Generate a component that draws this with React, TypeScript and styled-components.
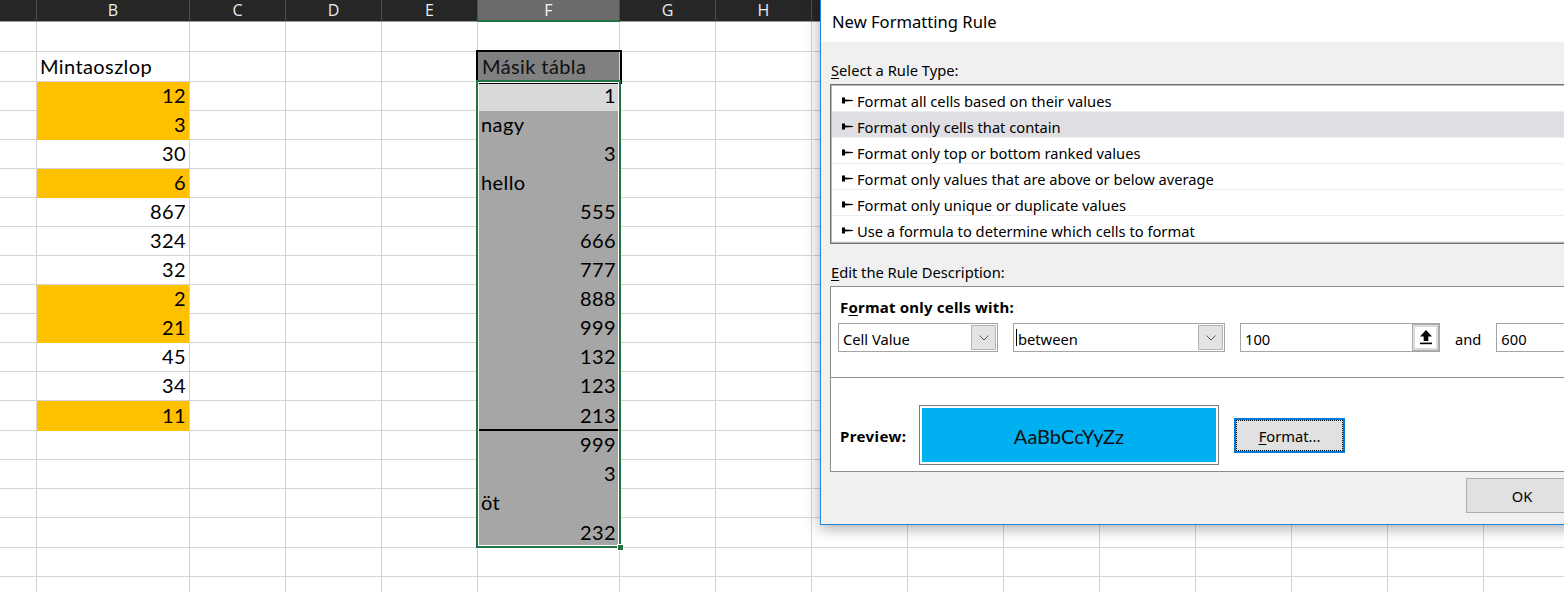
import React from 'react';
import styled, { createGlobalStyle, css } from 'styled-components';

const GlobalStyle = createGlobalStyle`
  html, body { margin: 0; padding: 0; background: #fff; }
  body { overflow: hidden; }
  *, *::before, *::after { box-sizing: border-box; }
`;

type Col = { key: string; label: string; w: number };
const COLS: Col[] = [
  { key: 'A', label: '', w: 37 },
  { key: 'B', label: 'B', w: 153 },
  { key: 'C', label: 'C', w: 96 },
  { key: 'D', label: 'D', w: 96 },
  { key: 'E', label: 'E', w: 96 },
  { key: 'F', label: 'F', w: 142 },
  { key: 'G', label: 'G', w: 96 },
  { key: 'H', label: 'H', w: 96 },
  { key: 'I', label: '', w: 96 },
  { key: 'J', label: '', w: 96 },
  { key: 'K', label: '', w: 96 },
  { key: 'L', label: '', w: 96 },
  { key: 'M', label: '', w: 96 },
  { key: 'N', label: '', w: 96 },
  { key: 'O', label: '', w: 96 },
  { key: 'P', label: '', w: 96 },
];

const ROW_H = [30, 30, 29, 29, 29, 29, 29, 29, 29, 29, 29, 29, 29, 30, 29, 29, 29, 30, 29, 29];

const YELLOW = '#ffc000';
const GRAY = '#a6a6a6';

type CellData = { v: string; num?: boolean; fill?: string; thickBottom?: boolean; boxed?: boolean };

const B: Record<number, CellData> = {
  2: { v: 'Mintaoszlop' },
  3: { v: '12', num: true, fill: YELLOW },
  4: { v: '3', num: true, fill: YELLOW },
  5: { v: '30', num: true },
  6: { v: '6', num: true, fill: YELLOW },
  7: { v: '867', num: true },
  8: { v: '324', num: true },
  9: { v: '32', num: true },
  10: { v: '2', num: true, fill: YELLOW },
  11: { v: '21', num: true, fill: YELLOW },
  12: { v: '45', num: true },
  13: { v: '34', num: true },
  14: { v: '11', num: true, fill: YELLOW },
};

const F: Record<number, CellData> = {
  2: { v: 'Másik tábla', fill: '#808080', boxed: true },
  3: { v: '1', num: true, fill: '#d9d9d9' },
  4: { v: 'nagy', fill: GRAY },
  5: { v: '3', num: true, fill: GRAY },
  6: { v: 'hello', fill: GRAY },
  7: { v: '555', num: true, fill: GRAY },
  8: { v: '666', num: true, fill: GRAY },
  9: { v: '777', num: true, fill: GRAY },
  10: { v: '888', num: true, fill: GRAY },
  11: { v: '999', num: true, fill: GRAY },
  12: { v: '132', num: true, fill: GRAY },
  13: { v: '123', num: true, fill: GRAY },
  14: { v: '213', num: true, fill: GRAY, thickBottom: true },
  15: { v: '999', num: true, fill: GRAY },
  16: { v: '3', num: true, fill: GRAY },
  17: { v: 'öt', fill: GRAY },
  18: { v: '232', num: true, fill: GRAY },
};

const Page = styled.div`
  position: relative;
  width: 1564px;
  height: 592px;
  overflow: hidden;
  background: #fff;
`;

const Sheet = styled.div`
  position: relative;
  display: flex;
  flex-direction: column;
`;

const HeaderRow = styled.div`
  display: flex;
  height: 22px;
  background: #262626;
`;

const HeaderCell = styled.div<{ $w: number; $active?: boolean }>`
  flex: 0 0 ${(p) => p.$w}px;
  height: 22px;
  display: flex;
  align-items: center;
  justify-content: center;
  border-right: 1px solid #4d4d4d;
  border-bottom: 1px solid #9a9a9a;
  font: 16px/1 'Open Sans', 'Noto Sans', sans-serif;
  color: #ececec;
  padding-bottom: 1px;
  ${(p) =>
    p.$active &&
    css`
      background: #6b6b6b;
      border-bottom: 2px solid #217346;
      color: #f6f6f6;
    `}
`;

const Row = styled.div<{ $h: number }>`
  display: flex;
  height: ${(p) => p.$h}px;
`;

const Cell = styled.div<{ $w: number; $fill?: string; $num?: boolean; $thickBottom?: boolean; $boxed?: boolean }>`
  position: relative;
  flex: 0 0 ${(p) => p.$w}px;
  height: 100%;
  display: flex;
  align-items: flex-end;
  justify-content: ${(p) => (p.$num ? 'flex-end' : 'flex-start')};
  padding: 0 3px ${(p) => (p.$thickBottom ? 4 : 5)}px 3px;
  background: ${(p) => p.$fill ?? '#fff'};
  border-right: 1px solid #d4d4d4;
  border-bottom: ${(p) => (p.$thickBottom ? '2px solid #000' : `1px solid ${p.$fill ?? '#d4d4d4'}`)};
  font: 20px/1 Lato, 'Liberation Sans', sans-serif;
  letter-spacing: 0.4px;
  color: #000;
  white-space: nowrap;
  ${(p) =>
    p.$boxed &&
    css`
      outline: 2px solid #000;
      z-index: 1;
      color: #111;
      padding-left: 4px;
    `}
`;

const Selection = styled.div`
  position: absolute;
  left: 476px;
  top: 80px;
  width: 145px;
  height: 468px;
  border: 2px solid #217346;
  box-shadow: inset 0 0 0 1px #fff;
  z-index: 2;
  pointer-events: none;
`;

const FillHandle = styled.div`
  position: absolute;
  right: -5px;
  bottom: -5px;
  width: 7px;
  height: 7px;
  background: #217346;
  border: 1px solid #fff;
`;

/* Dialog */

const Dialog = styled.div`
  position: absolute;
  left: 820px;
  top: -1px;
  width: 769px;
  border: 1px solid #1e86dc;
  background: #f0f0f0;
  box-shadow: 0 3px 14px rgba(0, 0, 0, 0.35);
  font-family: 'Noto Sans', 'Open Sans', sans-serif;
  font-size: 14.7px;
  color: #000;
  z-index: 5;
`;

const TitleBar = styled.div`
  height: 42px;
  background: #fff;
  display: flex;
  align-items: center;
  padding-left: 11px;
  font-size: 16.6px;
  color: #000;
`;

const Body = styled.div`
  display: flex;
  flex-direction: column;
  padding: 18px 10px 11px 9px;
`;

const Label = styled.div<{ $mt?: number }>`
  height: 20px;
  line-height: 20px;
  margin-top: ${(p) => p.$mt ?? 0}px;
  padding-left: 1px;
`;

const U = styled.span`
  text-decoration: underline;
  text-underline-offset: 2px;
`;

const ListBox = styled.div`
  margin-top: 4px;
  background: #fff;
  border: 1px solid #707070;
  padding: 1px;
  box-shadow: inset 0 0 0 1px #b8b8b8;
`;

const ListItem = styled.div<{ $selected?: boolean }>`
  height: 26px;
  display: flex;
  align-items: center;
  gap: 4px;
  padding: 4px 0 0 10px;
  border-bottom: 1px solid #ededed;
  background: ${(p) => (p.$selected ? '#dfdee3' : '#fff')};
  white-space: nowrap;
`;

const BulletWrap = styled.span`
  display: flex;
  align-items: center;
`;

const Panel = styled.div`
  margin-top: 4px;
  background: #fff;
  border: 1px solid #8c8c8c;
`;

const TopSection = styled.div`
  padding: 9px 7px 25px 7px;
  border-bottom: 1px solid #8c8c8c;
`;

const Heading = styled.div`
  height: 22px;
  line-height: 20px;
  padding: 1px 0 0 2px;
  font-weight: 700;
  font-size: 15px;
  letter-spacing: 0.2px;
`;

const ControlRow = styled.div`
  margin-top: 5px;
  display: flex;
  align-items: center;
  gap: 15px;
  height: 29px;
`;

const Field = styled.div<{ $w: number }>`
  flex: 0 0 ${(p) => p.$w}px;
  height: 29px;
  display: flex;
  align-items: center;
  border: 1px solid #a5a5a5;
  background: #fff;
  padding: 1px 1px 1px 4px;
`;

const FieldText = styled.div`
  flex: 1;
  display: flex;
  align-items: center;
  white-space: nowrap;
  padding-top: 2px;
`;

const Caret = styled.span`
  display: inline-block;
  width: 1px;
  height: 17px;
  background: #000;
  margin-right: 1px;
  margin-left: -2px;
  margin-top: -2px;
`;

const DropButton = styled.div`
  flex: 0 0 25px;
  height: 25px;
  display: flex;
  align-items: center;
  justify-content: center;
  background: #e3e3e3;
  border: 1px solid #b4b4b4;
`;

const CollapseButton = styled.div`
  flex: 0 0 27px;
  height: 27px;
  margin: -1px -1px -1px 0;
  display: flex;
  align-items: center;
  justify-content: center;
  background: #fff;
  border: 1px solid #adadad;
  box-shadow: inset 0 0 0 2px #dcdcdc;
`;

const AndText = styled.span`
  flex: 0 0 auto;
  padding-top: 2px;
`;

const BottomSection = styled.div`
  display: flex;
  align-items: center;
  padding: 27px 7px 6px 9px;
`;

const PreviewLabel = styled.div`
  flex: 0 0 79px;
  font-weight: 700;
  font-size: 15px;
  letter-spacing: 0.4px;
  padding-top: 2px;
`;

const PreviewBox = styled.div`
  flex: 0 0 300px;
  height: 60px;
  border: 1px solid #7a7a7a;
  padding: 2px;
  background: #fff;
`;

const PreviewFill = styled.div`
  height: 100%;
  background: #00b0f0;
  display: flex;
  align-items: center;
  justify-content: center;
  font: 20px/1 Lato, 'Liberation Sans', sans-serif;
  color: #111;
  padding-top: 1px;
`;

const Button = styled.div<{ $focused?: boolean; $w?: number }>`
  position: relative;
  flex: 0 0 ${(p) => p.$w ?? 112}px;
  height: 35px;
  display: flex;
  align-items: center;
  justify-content: center;
  background: #e1e1e1;
  border: 1px solid #adadad;
  padding-top: 1px;
  ${(p) =>
    p.$focused &&
    css`
      border: 2px solid #0078d7;
      &::after {
        content: '';
        position: absolute;
        inset: 0;
        border: 1px dotted #000;
      }
    `}
`;

const FormatButton = styled(Button)`
  margin-left: 15px;
`;

const Footer = styled.div`
  display: flex;
  justify-content: flex-end;
  margin-top: 6px;
`;

const Bullet = () => (
  <svg width="11" height="7" viewBox="0 0 11 7">
    <path d="M0 0.5 H3 V2.4 L11 3 V4 L3 4.6 V6.5 H0 Z" fill="#000" />
  </svg>
);

const Chevron = () => (
  <svg width="10" height="6" viewBox="0 0 10 6">
    <path d="M0.5 0.5 L5 5 L9.5 0.5" fill="none" stroke="#555" strokeWidth="1" />
  </svg>
);

const CollapseIcon = () => (
  <svg width="12" height="15" viewBox="0 0 12 15">
    <path d="M6 0 L12 6.5 H8.3 V11 H3.7 V6.5 H0 Z" fill="#000" />
    <rect x="0" y="12.6" width="12" height="1.6" fill="#000" />
  </svg>
);

const RULES = [
  'Format all cells based on their values',
  'Format only cells that contain',
  'Format only top or bottom ranked values',
  'Format only values that are above or below average',
  'Format only unique or duplicate values',
  'Use a formula to determine which cells to format',
];

export default function App() {
  return (
    <Page>
      <GlobalStyle />
      <Sheet>
        <HeaderRow>
          {COLS.map((c) => (
            <HeaderCell key={c.key} $w={c.w} $active={c.key === 'F'}>
              {c.label}
            </HeaderCell>
          ))}
        </HeaderRow>
        {ROW_H.map((h, ri) => {
          const r = ri + 1;
          return (
            <Row key={r} $h={h}>
              {COLS.map((c) => {
                const d = c.key === 'B' ? B[r] : c.key === 'F' ? F[r] : undefined;
                return (
                  <Cell
                    key={c.key}
                    $w={c.w}
                    $fill={d?.fill}
                    $num={d?.num}
                    $thickBottom={d?.thickBottom}
                    $boxed={d?.boxed}
                  >
                    {d?.v}
                  </Cell>
                );
              })}
            </Row>
          );
        })}
        <Selection>
          <FillHandle />
        </Selection>
      </Sheet>

      <Dialog>
        <TitleBar>New Formatting Rule</TitleBar>
        <Body>
          <Label>
            <U>S</U>elect a Rule Type:
          </Label>
          <ListBox>
            {RULES.map((r, i) => (
              <ListItem key={r} $selected={i === 1}>
                <BulletWrap>
                  <Bullet />
                </BulletWrap>
                <span>{r}</span>
              </ListItem>
            ))}
          </ListBox>
          <Label $mt={18}>
            <U>E</U>dit the Rule Description:
          </Label>
          <Panel>
            <TopSection>
              <Heading>
                F<U>o</U>rmat only cells with:
              </Heading>
              <ControlRow>
                <Field $w={160}>
                  <FieldText>Cell Value</FieldText>
                  <DropButton>
                    <Chevron />
                  </DropButton>
                </Field>
                <Field $w={212}>
                  <FieldText>
                    <Caret />
                    between
                  </FieldText>
                  <DropButton>
                    <Chevron />
                  </DropButton>
                </Field>
                <Field $w={200}>
                  <FieldText>100</FieldText>
                  <CollapseButton>
                    <CollapseIcon />
                  </CollapseButton>
                </Field>
                <AndText>and</AndText>
                <Field $w={200}>
                  <FieldText>600</FieldText>
                </Field>
              </ControlRow>
            </TopSection>
            <BottomSection>
              <PreviewLabel>Preview:</PreviewLabel>
              <PreviewBox>
                <PreviewFill>AaBbCcYyZz</PreviewFill>
              </PreviewBox>
              <FormatButton $focused $w={111}>
                <span>
                  <U>F</U>ormat...
                </span>
              </FormatButton>
            </BottomSection>
          </Panel>
          <Footer>
            <Button>OK</Button>
          </Footer>
        </Body>
      </Dialog>
    </Page>
  );
}
